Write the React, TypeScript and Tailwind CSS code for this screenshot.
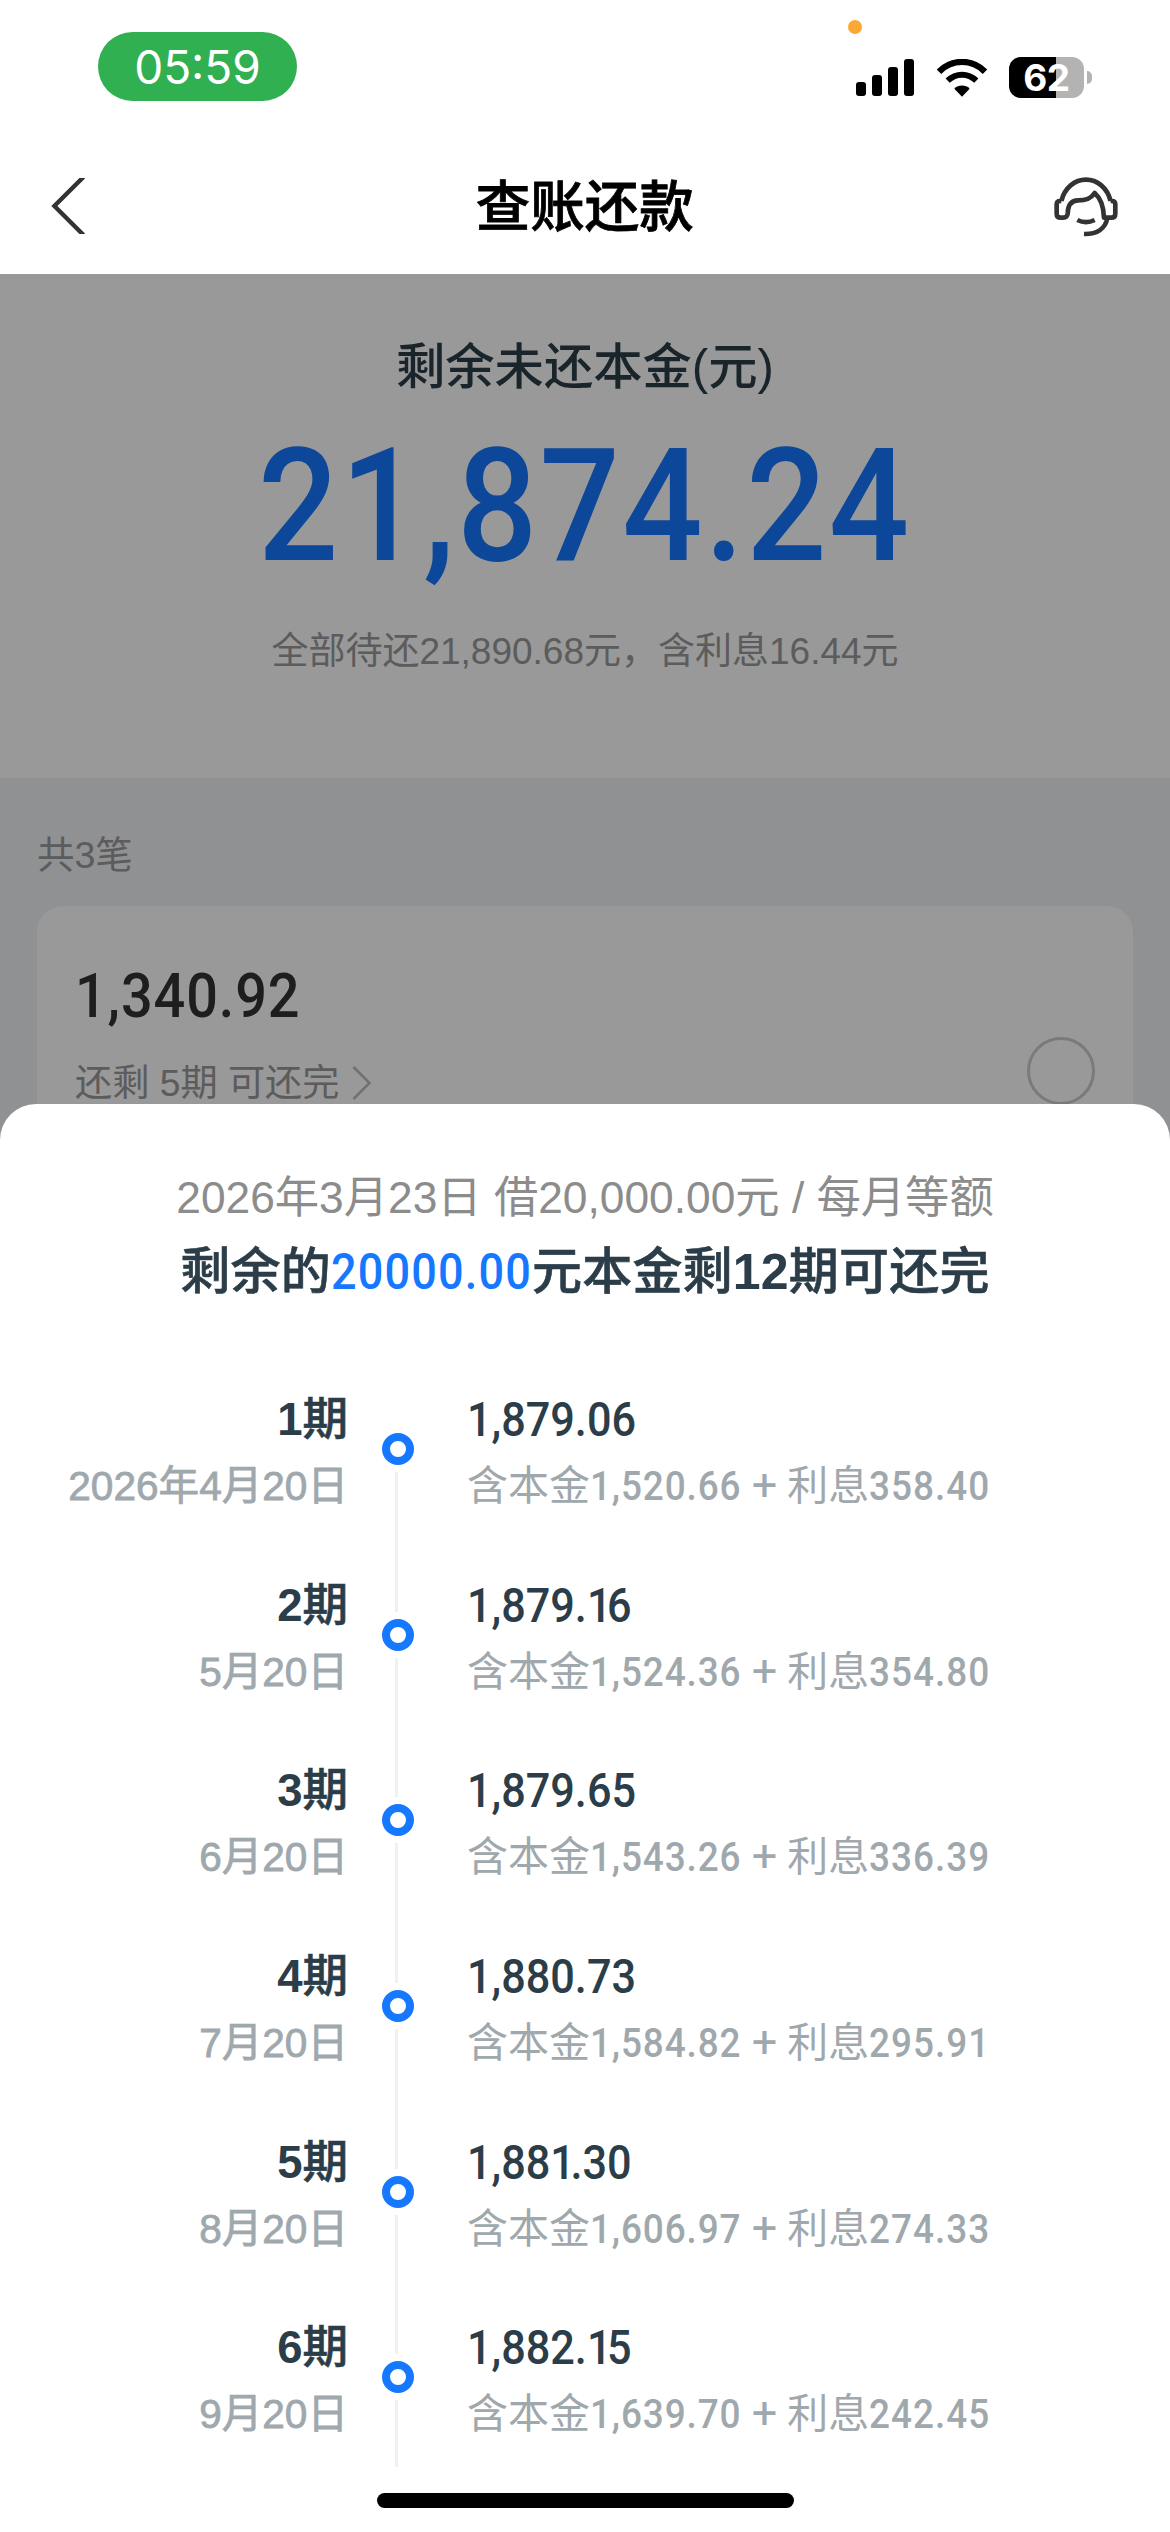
interface Installment {
  period: number;
  date: string;
  amount: string;
  principal: string;
  interest: string;
}

const installments: Installment[] = [
  { period: 1, date: '2026年4月20日', amount: '1,879.06', principal: '1,520.66', interest: '358.40' },
  { period: 2, date: '5月20日', amount: '1,879.16', principal: '1,524.36', interest: '354.80' },
  { period: 3, date: '6月20日', amount: '1,879.65', principal: '1,543.26', interest: '336.39' },
  { period: 4, date: '7月20日', amount: '1,880.73', principal: '1,584.82', interest: '295.91' },
  { period: 5, date: '8月20日', amount: '1,881.30', principal: '1,606.97', interest: '274.33' },
  { period: 6, date: '9月20日', amount: '1,882.15', principal: '1,639.70', interest: '242.45' },
];

const NUMBER_SCALE = 0.9;

// a "1" is set tighter, except in front of a comma
const TIGHT_ONE = /(1(?!,))/;

// width of the unscaled number in em
const numberWidth = (value: string, tracking: number) =>
  value.split(TIGHT_ONE).reduce((sum, part) => {
    if (part === '1') return sum + 0.465;
    return part.split('').reduce((acc, char) => {
      if (char === ',') return acc + 0.2 + tracking;
      if (char === '.') return acc + 0.27 + tracking;
      return acc + 0.565 + tracking;
    }, sum);
  }, 0);

// condensed digits for money amounts
const Num = ({ value, tracking = 0 }: { value: string; tracking?: number }) => (
  <span
    className="inline-block origin-left font-['Roboto','Noto_Sans_CJK_SC',sans-serif] font-medium whitespace-nowrap"
    style={{
      letterSpacing: `${tracking}em`,
      transform: `scaleX(${NUMBER_SCALE})`,
      marginRight: `${-(1 - NUMBER_SCALE) * numberWidth(value, tracking)}em`,
    }}
  >
    {value.split(TIGHT_ONE).map((part, i) =>
      part === '1' ? (
        <span key={i} className="tracking-[-0.1em]">
          1
        </span>
      ) : (
        part
      ),
    )}
  </span>
);

const StatusBar = () => (
  <div className="relative flex h-[138px] items-start justify-between pl-[98px] pr-[78px]">
    <div className="mt-8 flex h-[69px] w-[199px] items-center justify-center rounded-full bg-[#30b050] pt-px font-['Inter',sans-serif] text-[46px] text-white">
      05:59
    </div>
    <span className="absolute left-[848px] top-5 size-[14px] rounded-full bg-[#fba834]" />
    <div className="mt-[57px] flex h-[41px] items-center">
      <div className="flex h-[37px] items-end gap-[6px]">
        <span className="h-[14px] w-[10px] rounded-[3px] bg-black" />
        <span className="h-[21px] w-[10px] rounded-[3px] bg-black" />
        <span className="h-[29px] w-[10px] rounded-[3px] bg-black" />
        <span className="h-[37px] w-[10px] rounded-[3px] bg-black" />
      </div>
      <svg className="ml-[22px] h-[38px] w-[52px]" viewBox="0 0 156 114" fill="none" stroke="#000">
        <path d="M9 38 C48 -1 108 -1 147 38" strokeWidth="19" />
        <path d="M35 65 C60 41 96 41 121 65" strokeWidth="18" />
        <path d="M78 113 L55 89 C66 76 90 76 101 89 Z" fill="#000" stroke="none" />
      </svg>
      <div className="ml-[21px] h-[41px] w-[75px] rounded-[12px] bg-[linear-gradient(to_right,#000_47px,#b3b3b3_47px)] text-center font-['Inter',sans-serif] text-[37px] font-bold leading-[41px] tracking-[-0.5px] text-white">
        62
      </div>
      <span className="ml-[3px] h-[13px] w-[5px] rounded-r-full bg-[#b3b3b3]" />
    </div>
  </div>
);

const NavBar = () => (
  <div className="flex h-[136px] items-center justify-between pl-[51px] pr-[47px]">
    <svg className="h-[56px] w-[69px]" viewBox="0 0 69 56" fill="none" stroke="#333" strokeWidth="4.4">
      <path d="M32.500 -1 L3.400 28 L32.500 57" />
    </svg>
    <h1 className="pt-1 text-[54.500px] font-medium text-black [-webkit-text-stroke:0.8px]">查账还款</h1>
    <svg
      className="h-[66.700px] w-[73.300px]"
      viewBox="0 0 220 200"
      fill="none"
      stroke="#333"
      strokeWidth="14"
      strokeLinejoin="round"
    >
      <path d="M34 84 C44 44 74 20 108 20 S172 44 182 84" />
      <path d="M34 84 H30 Q20 84 20 94 V122 Q20 134 32 134 H40 Q52 134 53 122 C54 92 66 82 84 82 C108 82 122 78 134 60 C150 74 161 96 162 134 H184 Q196 134 196 122 V94 Q196 84 186 84 H182" />
      <path d="M172 136 C166 166 142 184 102 183" />
      <path d="M82 141 Q108 154 134 141" />
    </svg>
  </div>
);

const Summary = () => (
  <section className="flex h-[504px] flex-col items-center bg-white pt-[57px]">
    <h2 className="h-[72px] text-[49.300px] font-medium leading-[72px] text-[#2b3d48]">剩余未还本金(元)</h2>
    <div className="mt-[39px] h-[128px] text-[157px] leading-[128px] text-[#1677ff]">
      <Num value="21,874.24" tracking={0.016} />
    </div>
    <p className="mt-[58px] h-12 text-[37px] leading-[48px] text-[#999]">全部待还21,890.68元，含利息16.44元</p>
  </section>
);

const LoanList = () => (
  <section className="px-[37px] pt-[52px]">
    <p className="h-[50px] text-[37.500px] leading-[50px] text-[#999]">共3笔</p>
    <div className="mt-[26px] flex h-[300px] justify-between rounded-[26px] bg-white pl-[38px] pr-[38px]">
      <div className="pt-[55px]">
        <div className="h-[70px] text-[62px] leading-[70px] text-[#333]">
          <Num value="1,340.92" tracking={0.016} />
        </div>
        <div className="mt-[27px] flex h-[50px] items-center text-[37.200px] leading-[50px] text-[#999]">
          还剩 5期 可还完
          <svg className="ml-[13px] h-[34px] w-[20px]" viewBox="0 0 20 34" fill="none" stroke="#bbb" strokeWidth="2.500">
            <path d="M1.500 1 L17.500 17 L1.500 33" />
          </svg>
        </div>
      </div>
      <span className="mt-[131px] size-[68px] rounded-full border-[3px] border-[#ccc]" />
    </div>
  </section>
);

const InstallmentRow = ({ item, first }: { item: Installment; first: boolean }) => (
  <li className="flex h-[185.680px]">
    <div className="w-[348px] pt-[17px] text-right">
      <p className="h-[62px] text-[45.500px] font-medium leading-[62px] text-[#2b3d48] [-webkit-text-stroke:0.6px]">
        <span className="font-bold [-webkit-text-stroke:0px]">{item.period}</span>期
      </p>
      <p className="mt-[7px] h-[56px] text-[40.600px] leading-[56px] text-[#9fa8ad] [-webkit-text-stroke:0.8px]">
        {item.date}
      </p>
    </div>
    <div className="ml-[34px] flex w-8 flex-col pl-[13px]">
      <span className={first ? 'h-[54px]' : 'h-[54px] w-[3px] bg-[#f0f0f0]'} />
      <span className="my-[7px] -ml-[13px] size-8 shrink-0 rounded-full border-8 border-[#1677ff]" />
      <span className="w-[3px] flex-1 bg-[#f0f0f0]" />
    </div>
    <div className="ml-[53px] pt-[17px]">
      <p className="h-[62px] text-[48px] leading-[62px] text-[#2b3d48]">
        <Num value={item.amount} />
      </p>
      <p className="mt-[7px] h-[56px] whitespace-nowrap text-[41px] leading-[56px] text-[#9fa8ad]">
        含本金
        <Num value={item.principal} tracking={0.024} />
        <span className="mx-[10px] inline-block font-['Roboto',sans-serif] text-[45px] leading-none">+</span>
        利息
        <Num value={item.interest} tracking={0.028} />
      </p>
    </div>
  </li>
);

const InstallmentSheet = () => (
  <section className="absolute inset-x-0 bottom-0 flex h-[1428px] flex-col items-center rounded-t-[36px] bg-white pt-[64px]">
    <p className="h-[60px] text-[44.300px] leading-[60px] text-[#8c8c8c]">2026年3月23日 借20,000.00元 / 每月等额</p>
    <p className="mt-[11px] h-[66px] text-[50px] font-medium leading-[66px] tracking-[0.2px] text-[#2b3d48] [-webkit-text-stroke:0.6px]">
      剩余的
      <span className="text-[#1677ff] [-webkit-text-stroke:0px]">
        <Num value="20000.00" tracking={0.026} />
      </span>
      元本金剩<span className="font-bold [-webkit-text-stroke:0px]">12</span>期可还完
    </p>
    <ul className="mt-[67px] h-[1095px] w-full overflow-hidden">
      {installments.map((item, i) => (
        <InstallmentRow key={item.period} item={item} first={i === 0} />
      ))}
    </ul>
    <div className="mt-[26px] h-[15px] w-[417px] rounded-full bg-black" />
  </section>
);

export default function App() {
  return (
    <main className="relative h-[2532px] w-[1170px] overflow-hidden bg-white font-['Liberation_Sans','Noto_Sans_CJK_SC',sans-serif]">
      <StatusBar />
      <NavBar />
      <div className="relative h-[2258px] bg-[#f1f2f5]">
        <Summary />
        <LoanList />
        <div className="absolute inset-0 bg-black/40" />
      </div>
      <InstallmentSheet />
    </main>
  );
}
